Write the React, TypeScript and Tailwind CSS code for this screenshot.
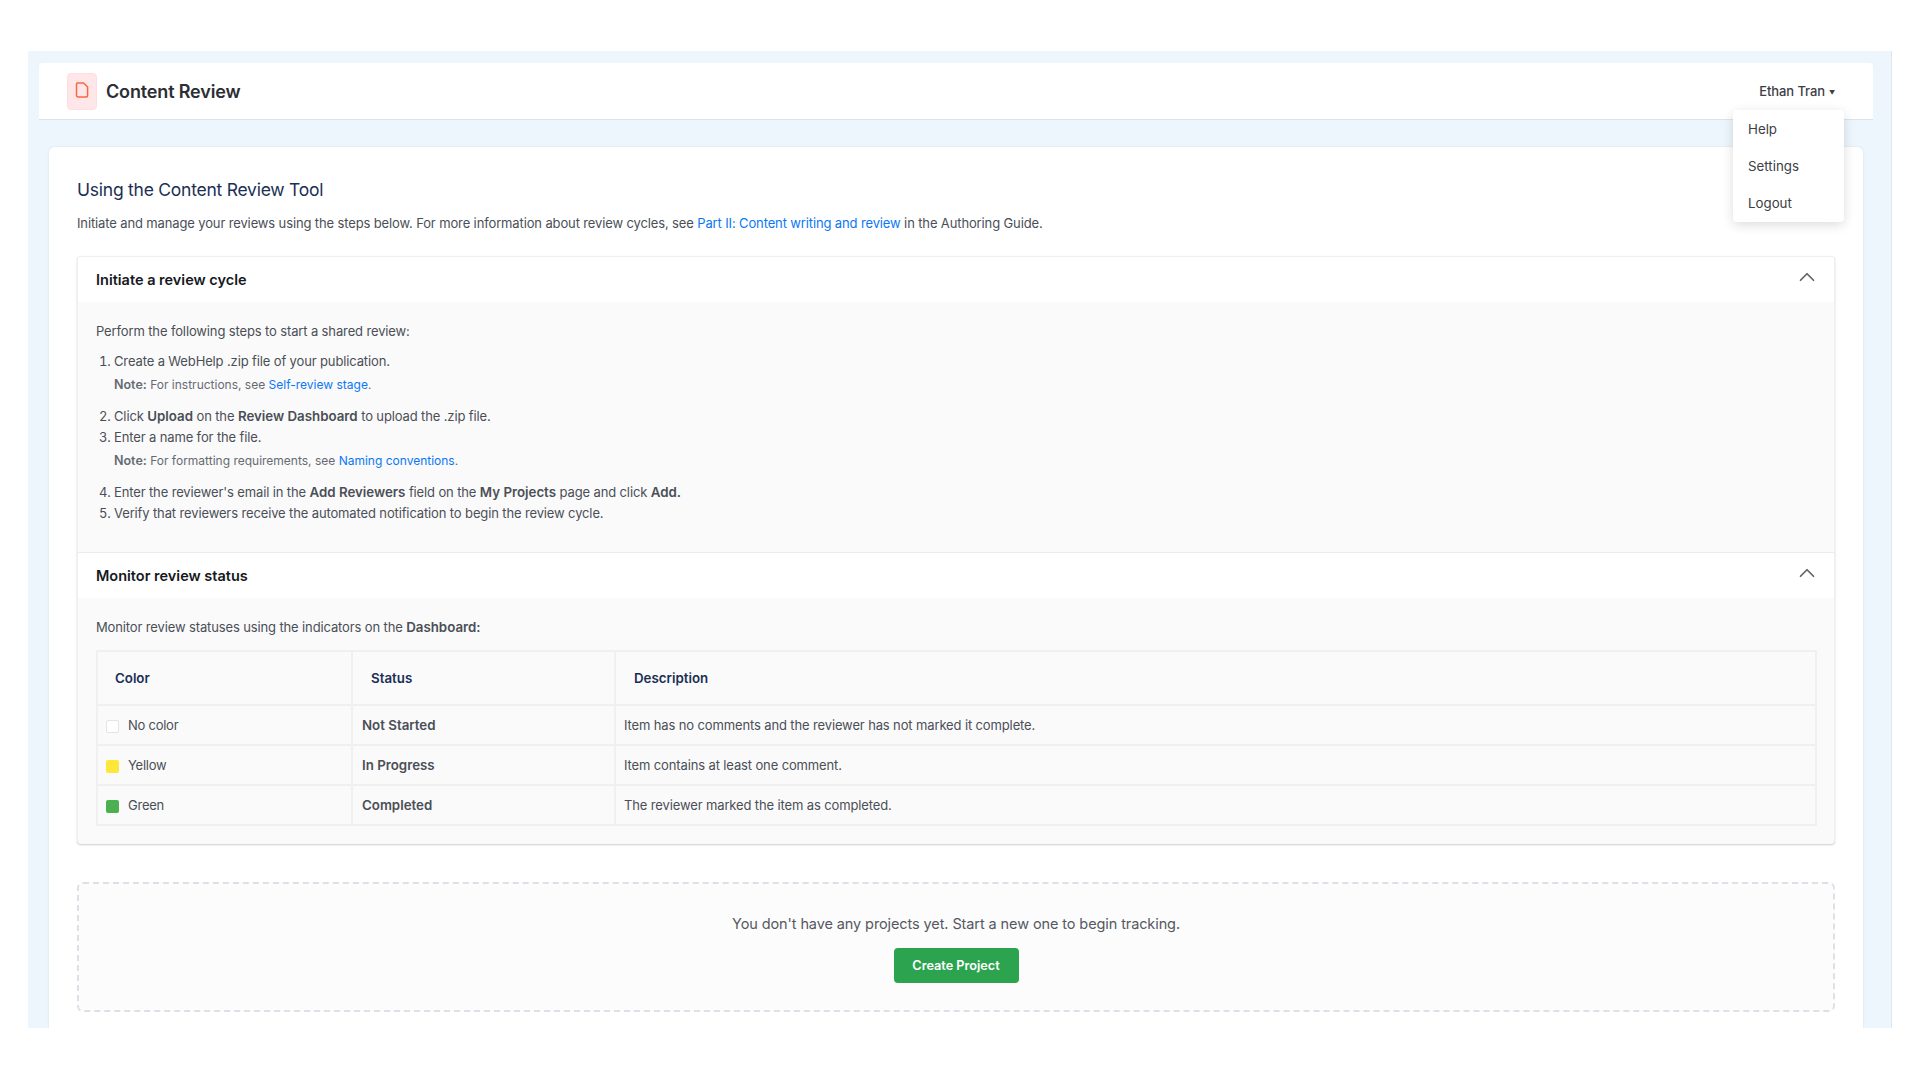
import { ChevronUp } from 'lucide-react';

const font = { fontFamily: 'Inter, "Noto Sans", sans-serif' };

function Strong({ children }: { children: React.ReactNode }) {
  return <b className="text-[13.3px] font-semibold tracking-normal">{children}</b>;
}

function Note({ children }: { children: React.ReactNode }) {
  return <p className="text-[12px] leading-[21px] tracking-normal text-[#666b73]">{children}</p>;
}

function AccordionHeader({ title }: { title: string }) {
  return (
    <div className="flex h-[45px] items-center justify-between bg-white pl-[18px] pr-[14px]">
      <h3 className="text-[14.5px] font-semibold tracking-normal text-[#16181d]">{title}</h3>
      <ChevronUp size={26} strokeWidth={1.6} className="-mt-[6px] text-[#5f6368]" />
    </div>
  );
}

const rows = [
  { swatch: 'bg-white border border-[#e2e4e8]', color: 'No color', status: 'Not Started', desc: 'Item has no comments and the reviewer has not marked it complete.' },
  { swatch: 'bg-[#fde83a]', color: 'Yellow', status: 'In Progress', desc: 'Item contains at least one comment.' },
  { swatch: 'bg-[#4caf50]', color: 'Green', status: 'Completed', desc: 'The reviewer marked the item as completed.' },
];

export default function App() {
  return (
    <div className="h-[1080px] overflow-hidden bg-white pl-[28px] pr-[28px] pt-[51px] text-[13px] tracking-[-0.13px] text-[#4a4f57]" style={font}>
      <div className="relative h-[977px] overflow-hidden border-r border-[#dfe8ef] bg-[#edf6fd] pl-[11px] pr-[18px] pt-[12px]">
        <header className="flex h-[57px] items-center justify-between rounded-t-[4px] border-b border-[#dfe3e8] bg-white pl-[28px] pr-[38px]">
          <div className="flex items-center gap-[9px]">
            <div className="flex h-[37px] w-[30px] justify-center rounded-[4px] border border-[#ffdde0] bg-[#ffe6e8] pt-[8px]">
              <svg width="14" height="16" viewBox="0 0 14 16" fill="none" stroke="#f9683f" strokeWidth="1.5" strokeLinejoin="round">
                <path d="M2.6 1H8.6L12.6 5V13.2C12.6 14.2 11.9 15 10.9 15H3.2C2.2 15 1.5 14.2 1.5 13.2V2.2C1.5 1.5 1.9 1 2.6 1Z" />
              </svg>
            </div>
            <h1 className="text-[18px] font-semibold tracking-[-0.15px] text-[#2b2e33]">Content Review</h1>
          </div>
          <div className="mt-[1px] flex items-center gap-[4px] text-[13px] font-medium tracking-[-0.1px] text-[#3c4046]">
            Ethan Tran
            <span className="mt-[1px] text-[6px]">▼</span>
          </div>
        </header>

        <nav className="absolute left-[1705px] top-[59px] z-10 flex h-[112px] w-[111px] flex-col justify-center rounded-[4px] bg-white pl-[15px] pt-[2px] text-[13.3px] tracking-normal text-[#3c4046] shadow-[0_3px_12px_rgba(0,0,0,0.14)]">
          <a className="flex h-[37px] items-center">Help</a>
          <a className="flex h-[37px] items-center">Settings</a>
          <a className="flex h-[37px] items-center">Logout</a>
        </nav>

        <main className="ml-[10px] mr-[10px] mt-[27px] rounded-t-[6px] bg-white px-[28px] pt-[30px] shadow-[0_0_3px_rgba(0,0,0,0.08)]">
          <h2 className="text-[17.5px] leading-[26px] tracking-[-0.24px] text-[#1b2f55]">Using the Content Review Tool</h2>
          <p className="mt-[10px] leading-[21px]">
            Initiate and manage your reviews using the steps below. For more information about review cycles, see{' '}
            <a className="text-[#0a78f5]">Part II: Content writing and review</a> in the Authoring Guide.
          </p>

          <section className="mt-[22px] overflow-hidden rounded-[4px] border-x border-t border-[#efefef] bg-[#fafafa] shadow-[0_1px_2px_rgba(0,0,0,0.2)]">
            <AccordionHeader title="Initiate a review cycle" />
            <div className="h-[251px] border-b border-[#ececec] pl-[18px] pt-[19px] leading-[21px]">
              <p>Perform the following steps to start a shared review:</p>
              <ol className="mt-[9px] list-decimal pl-[18px]">
                <li>
                  Create a WebHelp .zip file of your publication.
                  <div className="mb-[11px] mt-[2px]">
                    <Note>
                      <b className="text-[12.5px] font-semibold">Note:</b> For instructions, see <a className="text-[#0a78f5]">Self-review stage</a>.
                    </Note>
                  </div>
                </li>
                <li>
                  Click <Strong>Upload</Strong> on the <Strong>Review Dashboard</Strong> to upload the .zip file.
                </li>
                <li>
                  Enter a name for the file.
                  <div className="mb-[11.5px] mt-[1.5px]">
                    <Note>
                      <b className="text-[12.5px] font-semibold">Note:</b> For formatting requirements, see <a className="text-[#0a78f5]">Naming conventions</a>.
                    </Note>
                  </div>
                </li>
                <li>
                  Enter the reviewer's email in the <Strong>Add Reviewers</Strong> field on the <Strong>My Projects</Strong> page and click <Strong>Add.</Strong>
                </li>
                <li>Verify that reviewers receive the automated notification to begin the review cycle.</li>
              </ol>
            </div>

            <AccordionHeader title="Monitor review status" />
            <div className="h-[246px] pl-[18px] pr-[17px] pt-[19px] leading-[21px]">
              <p>
                Monitor review statuses using the indicators on the <Strong>Dashboard:</Strong>
              </p>
              <table className="mt-[12px] w-full table-fixed border-collapse">
                <colgroup>
                  <col className="w-[255px]" />
                  <col className="w-[263px]" />
                  <col />
                </colgroup>
                <thead>
                  <tr className="h-[54px] text-left text-[13.3px] tracking-normal text-[#1b2f55]">
                    <th className="border-2 border-[#f0f0f0] pl-[17px] font-semibold">Color</th>
                    <th className="border-2 border-[#f0f0f0] pl-[18px] font-semibold">Status</th>
                    <th className="border-2 border-[#f0f0f0] pl-[18px] font-semibold">Description</th>
                  </tr>
                </thead>
                <tbody>
                  {rows.map((r) => (
                    <tr key={r.color} className="h-[40px]">
                      <td className="border-2 border-[#f0f0f0] pl-[8px]">
                        <div className="flex items-center gap-[9px] tracking-[-0.25px]">
                          <span className={`mt-[2px] h-[13px] w-[13px] rounded-[2px] ${r.swatch}`} />
                          {r.color}
                        </div>
                      </td>
                      <td className="border-2 border-[#f0f0f0] pl-[9px] text-[13.3px] font-semibold tracking-normal">{r.status}</td>
                      <td className="border-2 border-[#f0f0f0] pl-[8px]">{r.desc}</td>
                    </tr>
                  ))}
                </tbody>
              </table>
            </div>
          </section>

          <section className="mt-[38px] flex h-[130px] flex-col items-center rounded-[6px] border-2 border-dashed border-[#dde1e7] bg-[#fcfcfd] pt-[28px]">
            <p className="text-[14.5px] leading-[24px] tracking-[-0.1px] text-[#55595f]">You don't have any projects yet. Start a new one to begin tracking.</p>
            <button className="mt-[12px] h-[35px] w-[125px] rounded-[4px] bg-[#2ca44f] text-[12.7px] font-semibold tracking-normal text-white">Create Project</button>
          </section>
          <div className="h-[60px]" />
        </main>
      </div>
    </div>
  );
}
